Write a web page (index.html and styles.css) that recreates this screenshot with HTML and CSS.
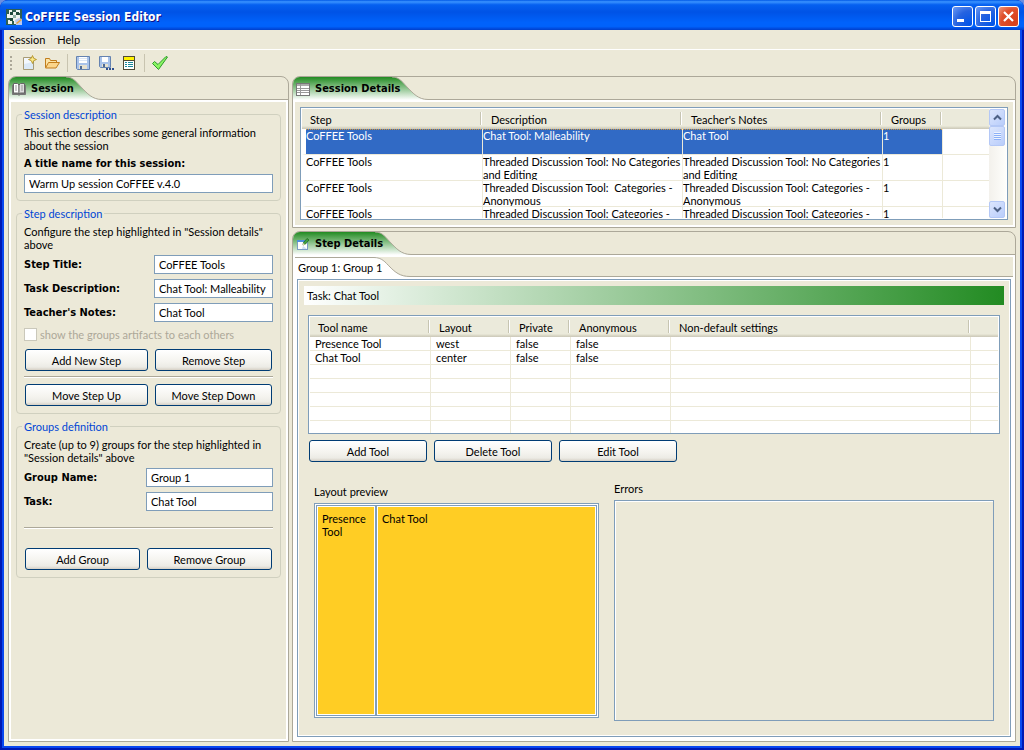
FILE: index.html
```html
<!DOCTYPE html>
<html lang="en">
<head>
  <meta charset="UTF-8" />
  <meta name="viewport" content="width=device-width, initial-scale=1" />
  <title>CoFFEE Session Editor</title>
  <link rel="stylesheet" href="styles.css">
</head>
<body>

  <div class="window">

    <header class="titlebar">
      <svg class="app-icon" viewBox="0 0 16 16" aria-hidden="true">
        <rect width="16" height="16" fill="#2f5f50" />
        <path d="M3 1h3v2h4V1h4v3h-3v2h3v4h-3v2h-1v3H8v-3H6v3H2v-4h2V9H1V5h2z" fill="#eef4ee" />
        <path d="M4 3h3v3H4zM10 3h3v3h-3zM4 9h3v3H4z" fill="#1d4a3b" />
        <path d="M7 6h3v3H7z" fill="#8fb3a4" />
        <path d="M9 11l4-2 3 1v6h-6z" fill="#b9c8ee" />
        <path d="M10 14l5-4 1 1-5 4z" fill="#e8a33c" />
      </svg>
      <h1>CoFFEE Session Editor</h1>
      <div class="window-buttons">
        <button type="button" class="win-btn" aria-label="Minimize">
          <svg viewBox="0 0 19 19"><rect x="4" y="12" width="7" height="3" fill="#fff" /></svg>
        </button>
        <button type="button" class="win-btn" aria-label="Maximize">
          <svg viewBox="0 0 19 19"><path d="M4 4h11v11H4zM5 7v7h9V7z" fill="#fff" fill-rule="evenodd" /></svg>
        </button>
        <button type="button" class="win-btn close" aria-label="Close">
          <svg viewBox="0 0 19 19"><path d="M5 5l9 9M14 5l-9 9" stroke="#fff" stroke-width="2.2" /></svg>
        </button>
      </div>
    </header>

    <nav class="menubar">
      <button type="button">Session</button>
      <button type="button">Help</button>
    </nav>

    <div class="toolbar" role="toolbar" aria-label="Main toolbar">
      <span class="grip"></span>
      <button type="button" aria-label="New session">
        <svg viewBox="0 0 16 16">
          <path d="M2.500 2.500h10v12h-10z" fill="#f3f8fd" stroke="#a79b76" />
          <path d="M3 14V9l9-2v7z" fill="#dbe9f6" />
          <path d="M11.500 .5l1.200 2.800 2.800 1.200-2.800 1.200-1.200 2.800-1.200-2.800L7.500 4.500l2.800-1.200z" fill="#fbe98a" stroke="#b08d1c" stroke-width=".8" />
        </svg>
      </button>
      <button type="button" aria-label="Open session">
        <svg viewBox="0 0 16 16">
          <path d="M1.500 12.500v-9h4l1 2h6v2" fill="#fbe3a6" stroke="#c17d1c" />
          <path d="M1.500 13l3-5.500h11l-3.500 5.500z" fill="#fbd58a" stroke="#c17d1c" stroke-linejoin="round" />
        </svg>
      </button>
      <span class="divider"></span>
      <button type="button" aria-label="Save">
        <svg viewBox="0 0 16 16">
          <path d="M1.500 1.500h13v13h-12l-1-1z" fill="#a9c3ea" stroke="#6583b0" />
          <rect x="4" y="2" width="8" height="6" fill="#fff" />
          <path d="M4 3.500h8M4 5.500h8" stroke="#dbe6f5" />
          <rect x="4" y="10" width="8" height="4" fill="#e6e1cf" />
          <rect x="5" y="11" width="2" height="3" fill="#4d6a96" />
        </svg>
      </button>
      <button type="button" aria-label="Save as">
        <svg viewBox="0 0 16 16">
          <path d="M1.500 1.500h11v11h-10l-1-1z" fill="#a9c3ea" stroke="#6583b0" />
          <rect x="4" y="2" width="6" height="5" fill="#fff" />
          <rect x="4" y="9" width="6" height="3" fill="#e6e1cf" />
          <rect x="5" y="9" width="2" height="3" fill="#4d6a96" />
          <path d="M8 14h2M11 14h2M14 14h2" stroke="#2f4f8f" stroke-width="2" />
        </svg>
      </button>
      <button type="button" aria-label="Session properties">
        <svg viewBox="0 0 16 16">
          <rect x="2.500" y="1.500" width="11" height="13" fill="#fff" stroke="#4f4a35" />
          <rect x="3" y="2" width="10" height="3" fill="#fff200" />
          <path d="M3 5.500h10" stroke="#4f4a35" />
          <path d="M4 7.500h2M4 9.500h2M4 11.500h2M7 7.500h5M7 9.500h5M7 11.500h5" stroke="#1b8a9a" />
        </svg>
      </button>
      <span class="divider"></span>
      <button type="button" aria-label="Validate">
        <svg viewBox="0 0 16 16">
          <path d="M.5 8.500l2-2 3.500 3L14 1.500l1.500.5L6.500 14.500z" fill="#8af562" stroke="#2c982c" stroke-linejoin="round" />
        </svg>
      </button>
    </div>

    <main class="workspace">

      <section class="panel session">
        <div class="tabs">
          <h2 class="tab">
            <svg class="tab-icon" viewBox="0 0 16 16" aria-hidden="true">
              <path d="M1.500 4v9.500H7l1 1 1-1h5.500V4" fill="#777" stroke="#777" />
              <path d="M2.500 2.500h4L8 4v9l-1.500-1h-4z" fill="#fff" stroke="#666" />
              <path d="M8 4l1.500-1.500h4V12h-4L8 13z" fill="#ddd" stroke="#666" />
              <path d="M4 5h2M4 7h2M4 9h2M10 5h2M10 7h2M10 9h2" stroke="#999" />
            </svg>
            Session
          </h2>
          <svg class="tab-curve" viewBox="0 0 36 23" aria-hidden="true">
            <defs>
              <linearGradient id="tab-green" x1="0" y1="0" x2="0" y2="1">
                <stop offset="0" stop-color="#228b22" />
                <stop offset="1" stop-color="#fff" />
              </linearGradient>
            </defs>
            <path d="M0 0C8 0 11 6 16 11S26 22 36 23H0z" fill="url(#tab-green)" />
            <path d="M0 0C8 0 11 6 16 11S26 22.500 36 22.500" fill="none" stroke="#aca899" />
          </svg>
          <span class="tab-rest"></span>
        </div>
        <div class="panel-body forms">

          <fieldset>
            <legend>Session description</legend>
            <p>This section describes some general information<br>about the session</p>
            <label class="block-label" for="session-title">A title name for this session:</label>
            <input type="text" id="session-title" value="Warm Up session CoFFEE v.4.0">
          </fieldset>

          <fieldset>
            <legend>Step description</legend>
            <p>Configure the step highlighted in "Session details"<br>above</p>
            <div class="fields step-fields">
              <label for="step-title">Step Title:</label>
              <input type="text" id="step-title" value="CoFFEE Tools">
              <label for="task-description">Task Description:</label>
              <input type="text" id="task-description" value="Chat Tool: Malleability">
              <label for="teacher-notes">Teacher's Notes:</label>
              <input type="text" id="teacher-notes" value="Chat Tool">
            </div>
            <div class="check">
              <input type="checkbox" id="show-artifacts" disabled>
              <label for="show-artifacts">show the groups artifacts to each others</label>
            </div>
            <div class="buttons step-buttons">
              <button type="button" class="btn">Add New Step</button>
              <button type="button" class="btn">Remove Step</button>
            </div>
            <hr>
            <div class="buttons step-buttons">
              <button type="button" class="btn">Move Step Up</button>
              <button type="button" class="btn">Move Step Down</button>
            </div>
          </fieldset>

          <fieldset>
            <legend>Groups definition</legend>
            <p>Create (up to 9) groups for the step highlighted in<br>"Session details" above</p>
            <div class="fields group-fields">
              <label for="group-name">Group Name:</label>
              <input type="text" id="group-name" value="Group 1">
              <label for="group-task">Task:</label>
              <input type="text" id="group-task" value="Chat Tool">
            </div>
            <hr class="wide">
            <div class="buttons group-buttons">
              <button type="button" class="btn">Add Group</button>
              <button type="button" class="btn">Remove Group</button>
            </div>
          </fieldset>

        </div>
      </section>

      <div class="details">

        <section class="panel">
          <div class="tabs">
            <h2 class="tab">
              <svg class="tab-icon" viewBox="0 0 16 16" aria-hidden="true">
                <rect x="1.500" y="2.500" width="13" height="12" fill="#fff" stroke="#777" />
                <path d="M2 4h12" stroke="#aaa" stroke-width="2" />
                <path d="M2 7.500h12M2 9.500h12M2 11.500h12M5.500 3v11" stroke="#999" />
              </svg>
              Session Details
            </h2>
            <svg class="tab-curve" viewBox="0 0 36 23" aria-hidden="true">
              <path d="M0 0C8 0 11 6 16 11S26 22 36 23H0z" fill="url(#tab-green)" />
              <path d="M0 0C8 0 11 6 16 11S26 22.500 36 22.500" fill="none" stroke="#aca899" />
            </svg>
            <span class="tab-rest"></span>
          </div>
          <div class="panel-body">
            <div class="list session-list">
              <div class="list-view">
                <table class="grid session-grid">
                  <colgroup>
                    <col class="c-step"><col class="c-text"><col class="c-text"><col class="c-groups"><col>
                  </colgroup>
                  <thead>
                    <tr><th>Step</th><th>Description</th><th>Teacher's Notes</th><th>Groups</th><th></th></tr>
                  </thead>
                  <tbody>
                    <tr class="selected">
                      <td><div>CoFFEE Tools</div></td>
                      <td><div>Chat Tool: Malleability</div></td>
                      <td><div>Chat Tool</div></td>
                      <td><div>1</div></td>
                      <td></td>
                    </tr>
                    <tr>
                      <td><div>CoFFEE Tools</div></td>
                      <td><div>Threaded Discussion Tool: No Categories<br>and Editing</div></td>
                      <td><div>Threaded Discussion Tool: No Categories<br>and Editing</div></td>
                      <td><div>1</div></td>
                      <td></td>
                    </tr>
                    <tr>
                      <td><div>CoFFEE Tools</div></td>
                      <td><div>Threaded Discussion Tool:&nbsp; Categories -<br>Anonymous</div></td>
                      <td><div>Threaded Discussion Tool: Categories -<br>Anonymous</div></td>
                      <td><div>1</div></td>
                      <td></td>
                    </tr>
                    <tr>
                      <td><div>CoFFEE Tools</div></td>
                      <td><div>Threaded Discussion Tool: Categories -</div></td>
                      <td><div>Threaded Discussion Tool: Categories -</div></td>
                      <td><div>1</div></td>
                      <td></td>
                    </tr>
                  </tbody>
                </table>
              </div>
              <div class="scrollbar">
                <button type="button" aria-label="Scroll up">
                  <svg viewBox="0 0 9 9"><path d="M1 6.500L4.500 3 8 6.500" /></svg>
                </button>
                <div class="thumb"></div>
                <button type="button" class="down" aria-label="Scroll down">
                  <svg viewBox="0 0 9 9"><path d="M1 2.500L4.500 6 8 2.500" /></svg>
                </button>
              </div>
            </div>
          </div>
        </section>

        <section class="panel step">
          <div class="tabs">
            <h2 class="tab">
              <svg class="tab-icon" viewBox="0 0 16 16" aria-hidden="true">
                <rect x="2.500" y="5.500" width="10" height="8" fill="#fff" stroke="#7c9cc4" />
                <rect x="2" y="4" width="10" height="2" fill="#4f8fdc" />
                <path d="M7 13l1-3 4 3z" fill="#cfe0f4" />
                <path d="M8 9l.5-2.500L12 2.500l2 1.500-3.500 4z" fill="#3fa03f" stroke="#1d6b1d" stroke-width=".8" />
                <path d="M7.500 9.500l1-2.500 1.500 1.500z" fill="#e9dcae" />
              </svg>
              Step Details
            </h2>
            <svg class="tab-curve" viewBox="0 0 36 23" aria-hidden="true">
              <path d="M0 0C8 0 11 6 16 11S26 22 36 23H0z" fill="url(#tab-green)" />
              <path d="M0 0C8 0 11 6 16 11S26 22.500 36 22.500" fill="none" stroke="#aca899" />
            </svg>
            <span class="tab-rest"></span>
          </div>
          <div class="panel-body group-area">
            <div class="tabs sub-tabs">
              <h3 class="tab">Group 1: Group 1</h3>
              <svg class="tab-curve" viewBox="0 0 36 20" aria-hidden="true">
                <path d="M0 0C8 0 11 5 16 10S26 20 36 20H0z" fill="#fff" />
                <path d="M0 .5C8 .5 11 5 16 10S26 19.500 36 19.500" fill="none" stroke="#aca899" />
              </svg>
              <span class="tab-rest"></span>
            </div>

            <div class="group-page">
              <div class="task-bar">Task: Chat Tool</div>

              <div class="list tool-list">
                <table class="grid tool-grid">
                  <colgroup>
                    <col class="c-name"><col class="c-layout"><col class="c-private"><col class="c-anon"><col class="c-settings"><col>
                  </colgroup>
                  <thead>
                    <tr><th>Tool name</th><th>Layout</th><th>Private</th><th>Anonymous</th><th>Non-default settings</th><th></th></tr>
                  </thead>
                  <tbody>
                    <tr><td>Presence Tool</td><td>west</td><td>false</td><td>false</td><td></td><td></td></tr>
                    <tr><td>Chat Tool</td><td>center</td><td>false</td><td>false</td><td></td><td></td></tr>
                    <tr><td></td><td></td><td></td><td></td><td></td><td></td></tr>
                    <tr><td></td><td></td><td></td><td></td><td></td><td></td></tr>
                    <tr><td></td><td></td><td></td><td></td><td></td><td></td></tr>
                    <tr><td></td><td></td><td></td><td></td><td></td><td></td></tr>
                    <tr><td></td><td></td><td></td><td></td><td></td><td></td></tr>
                  </tbody>
                </table>
              </div>

              <div class="tool-buttons">
                <button type="button" class="btn">Add Tool</button>
                <button type="button" class="btn">Delete Tool</button>
                <button type="button" class="btn">Edit Tool</button>
              </div>

              <div class="previews">
                <div class="preview">
                  <h4>Layout preview</h4>
                  <div class="preview-frame">
                    <div class="pane west">Presence Tool</div>
                    <div class="pane center">Chat Tool</div>
                  </div>
                </div>
                <div class="errors">
                  <h4>Errors</h4>
                  <div class="errors-box"></div>
                </div>
              </div>
            </div>
          </div>
        </section>

      </div>
    </main>
  </div>

</body>
</html>
```
FILE: styles.css
```css
* {
  box-sizing: border-box;
}

body, html {
  margin: 0;
  height: 100%;
}

body {
  background: #6c8fe0;
  font-family: Lato, sans-serif;
  font-size: 11px;
  line-height: 13px;
  color: #000;
}

h1, h2, h3, h4, p {
  margin: 0;
  font-size: 11px;
  font-weight: normal;
}

button, input {
  font: inherit;
  color: inherit;
}

svg {
  display: block;
}

.window {
  display: flex;
  flex-direction: column;
  min-height: 100%;
  padding: 0 4px 4px;
  background: #ece9d8;
  border-radius: 8px 8px 0 0;
  box-shadow: inset 0 0 0 2px #0019b4, inset 0 0 0 4px #0a48f0;
  overflow: hidden;
}

/* Title bar */
.titlebar {
  display: flex;
  align-items: center;
  gap: 3px;
  height: 30px;
  margin: 0 -4px;
  padding: 3px 5px 0 6px;
  background: linear-gradient(#0058e6 0, #3a93ff 6%, #0560f0 16%, #0053e6 40%, #0062fb 75%, #0062fb 88%, #0046d8 97%, #0040c8 100%);
}

.app-icon {
  width: 16px;
  height: 16px;
}

.titlebar h1 {
  flex: 1;
  font-family: 'DejaVu Sans Condensed', 'DejaVu Sans', sans-serif;
  font-size: 12px;
  line-height: 16px;
  font-weight: 700;
  color: #fff;
  text-shadow: 1px 1px #0f1089;
}

.window-buttons {
  display: flex;
  gap: 2px;
}

.win-btn {
  width: 21px;
  height: 21px;
  padding: 0;
  border: 1px solid #fff;
  border-radius: 3px;
  background: radial-gradient(circle at 90% 90%, #0054e9 0, #2663e0 55%, #6d9bf5 100%);
}

.win-btn.close {
  background: radial-gradient(circle at 80% 80%, #d8401a 0, #e04f2b 60%, #ee9a80 100%);
}

/* Menu and toolbar */
.menubar {
  display: flex;
  gap: 12px;
  height: 20px;
  padding: 0 5px;
  border-bottom: 1px solid #fff;
}

.menubar button,
.toolbar button {
  padding: 0;
  border: none;
  background: none;
}

.toolbar {
  display: flex;
  align-items: center;
  gap: 7px;
  height: 26px;
  padding: 0 6px;
}

.toolbar button svg {
  width: 16px;
  height: 16px;
}

.grip {
  width: 2px;
  height: 14px;
  margin-right: 2px;
  background: repeating-linear-gradient(#aca899 0, #aca899 2px, transparent 2px, transparent 4px);
}

.divider {
  width: 1px;
  height: 18px;
  background: #c8c4b0;
}

/* Panels */
.workspace {
  flex: 1;
  display: grid;
  grid-template-columns: 281px 1fr;
  gap: 3px;
  padding: 0 4px 4px;
}

.details {
  display: flex;
  flex-direction: column;
  gap: 3px;
}

.panel {
  display: flex;
  flex-direction: column;
  border: 1px solid #aca899;
  border-radius: 8px 8px 0 0;
  overflow: hidden;
}

.panel.step {
  flex: 1;
}

.tabs {
  display: flex;
  height: 23px;
}

/* the fill stops short of the label's end, where the curve takes over */
.tab {
  position: relative;
  z-index: 1;
  display: flex;
  align-items: center;
  gap: 4px;
  padding-left: 2px;
  background: linear-gradient(#228b22, #fff) left / calc(100% - 8px) 100% no-repeat;
  font-family: 'DejaVu Sans Condensed', 'DejaVu Sans', sans-serif;
  font-weight: 700;
  white-space: nowrap;
}

.tab-icon {
  width: 16px;
  height: 16px;
}

.tab-curve {
  width: 36px;
  height: 23px;
  margin-left: -8px;
}

.tab-rest {
  flex: 1;
  border-bottom: 1px solid #aca899;
}

.panel-body {
  flex: 1;
  border: 2px solid #fff;
  padding: 5px;
}

/* Session forms */
.forms {
  display: flex;
  flex-direction: column;
  gap: 6px;
  padding-top: 6px;
}

fieldset {
  min-width: 0;
  margin: 0;
  padding: 5px 7px 7px;
  border: 1px solid #d0d0bf;
  border-radius: 4px;
}

legend {
  padding: 0 2px;
  margin-left: -2px;
  color: #0046d5;
}

fieldset p {
  white-space: nowrap;
}

input[type="text"] {
  width: 100%;
  height: 19px;
  padding: 0 4px;
  border: 1px solid #7f9db9;
  background: #fff;
}

.block-label {
  display: block;
  margin: 5px 0 4px;
}

.block-label,
.fields label {
  font-family: 'DejaVu Sans Condensed', 'DejaVu Sans', sans-serif;
  font-weight: 700;
}

.fields {
  display: grid;
  align-items: center;
  gap: 5px 0;
  margin-top: 4px;
}

.step-fields {
  grid-template-columns: 130px 1fr;
}

.group-fields {
  grid-template-columns: 122px 1fr;
}

.check {
  display: flex;
  align-items: center;
  gap: 3px;
  height: 13px;
  margin-top: 6px;
  color: #aca899;
}

.check input {
  appearance: none;
  width: 13px;
  height: 13px;
  margin: 0;
  border: 1px solid #cac8bb;
  background: #fff;
}

.buttons {
  display: grid;
  gap: 7px;
  margin-top: 8px;
  padding: 0 1px;
}

.step-buttons {
  grid-template-columns: 123px 1fr;
}

.group-buttons {
  grid-template-columns: 115px 1fr;
}

.btn {
  height: 22px;
  padding: 0 6px;
  border: 1px solid #003c74;
  border-radius: 3px;
  background: linear-gradient(#fff 0, #f4f3ee 60%, #ecebe5 85%, #d6d0c5 100%);
  white-space: nowrap;
}

hr {
  margin: 5px 0 0;
  border: none;
  border-top: 1px solid #aca899;
  border-bottom: 1px solid #fff;
}

hr + .buttons {
  margin-top: 6px;
}

hr.wide {
  margin: 16px 0 0;
}

hr.wide + .buttons {
  margin-top: 19px;
}

/* Tables */
.list {
  border: 1px solid #7f9db9;
  padding: 1px;
  background: #fff;
}

.session-list {
  display: flex;
  height: 113px;
}

.list-view {
  flex: 1;
  min-width: 0;
  overflow: hidden;
}

.grid {
  width: 100%;
  table-layout: fixed;
  border-collapse: separate;
  border-spacing: 0;
}

.grid th {
  height: 20px;
  padding: 0 8px;
  font-weight: normal;
  text-align: left;
  white-space: nowrap;
  background:
    linear-gradient(#fff, #fff) right 1px top 3px / 1px 13px no-repeat,
    linear-gradient(#c7c5b2, #c7c5b2) right 2px top 3px / 1px 13px no-repeat,
    linear-gradient(#ebeadb 0, #ebeadb 17px, #dedccb 18px, #cbc7b8 20px);
}

.grid th:last-child {
  background: linear-gradient(#ebeadb 0, #ebeadb 17px, #dedccb 18px, #cbc7b8 20px);
}

.grid td {
  padding: 0;
  border-right: 1px solid #ece9d8;
  border-bottom: 1px solid #ece9d8;
  white-space: nowrap;
}

.grid td:last-child {
  border-right: none;
}

.c-step {
  width: 181px;
}

.c-text {
  width: 200px;
}

.c-groups {
  width: 60px;
}

.session-grid td {
  height: 26px;
  vertical-align: top;
}

.session-grid td div {
  height: 25px;
  overflow: hidden;
}

.session-grid td:first-child {
  border-left: 4px solid #fff;
}

.selected td:not(:last-child) {
  background: #316ac5;
  background-clip: padding-box;
  color: #fff;
}

.selected td:not(:last-child) div {
  background: repeating-linear-gradient(90deg, #ce953a 0, #ce953a 1px, #316ac5 1px, #316ac5 2px) top / 100% 1px no-repeat;
}

/* Scrollbar */
.scrollbar {
  display: flex;
  flex-direction: column;
  width: 17px;
  background: linear-gradient(90deg, #f3f1ec, #fefefb);
}

.scrollbar button,
.thumb {
  display: flex;
  align-items: center;
  justify-content: center;
  width: 16px;
  height: 17px;
  padding: 0;
  border: 1px solid #b4c8f6;
  border-radius: 2px;
  background: linear-gradient(135deg, #dce6fd, #b9cdfb);
}

.thumb {
  height: 20px;
}

.thumb::before {
  content: "";
  width: 7px;
  height: 8px;
  background: repeating-linear-gradient(#eef4fe 0, #eef4fe 1px, #8cb0f8 1px, #8cb0f8 2px);
}

.scrollbar .down {
  margin-top: auto;
}

.scrollbar svg {
  width: 9px;
  height: 9px;
  fill: none;
  stroke: #4d6185;
  stroke-width: 2;
}

/* Step details */
.group-area {
  display: flex;
  flex-direction: column;
  padding: 0;
}

.sub-tabs {
  height: 20px;
}

.sub-tabs .tab {
  padding-left: 3px;
  font-family: inherit;
  font-weight: normal;
  background:
    linear-gradient(#aca899, #aca899) left top / calc(100% - 8px) 1px no-repeat,
    linear-gradient(#fff, #fff) left / calc(100% - 8px) 100% no-repeat;
}

.sub-tabs .tab-curve {
  height: 20px;
}

.group-page {
  flex: 1;
  display: flex;
  flex-direction: column;
  margin: 2px;
  padding: 6px;
  border: 1px solid #7f9db9;
  outline: 2px solid #fff;
  box-shadow: inset 0 0 0 1px #fff;
}

.task-bar {
  padding: 3px;
  background: linear-gradient(90deg, #fff, #228b22);
}

.tool-list {
  height: 119px;
  margin: 10px 4px 0;
  overflow: hidden;
}

.tool-grid td {
  height: 14px;
  padding: 0 5px;
}

.c-name {
  width: 121px;
}

.c-layout {
  width: 80px;
}

.c-private {
  width: 60px;
}

.c-anon {
  width: 100px;
}

.c-settings {
  width: 300px;
}

.tool-buttons {
  display: flex;
  gap: 7px;
  margin: 6px 5px 0;
}

.tool-buttons .btn {
  width: 118px;
}

.previews {
  flex: 1;
  display: grid;
  grid-template-columns: 3fr 4fr;
  gap: 15px;
  margin: 20px 10px 9px;
}

.preview,
.errors {
  display: flex;
  flex-direction: column;
}

.preview {
  padding: 3px 0;
}

.preview h4,
.errors h4 {
  margin-bottom: 5px;
}

.preview-frame {
  flex: 1;
  display: grid;
  grid-template-columns: 60px 1fr;
  border: 1px solid #7f9db9;
  padding: 1px;
  background: #fff;
}

.pane {
  padding: 6px 5px;
  border: 1px solid #7f9db9;
  background: #ffcd24;
  box-shadow: inset 0 0 0 1px #fff;
}

.errors-box {
  flex: 1;
  border: 1px solid #7f9db9;
  box-shadow: inset 1px 1px #fff;
}
```
